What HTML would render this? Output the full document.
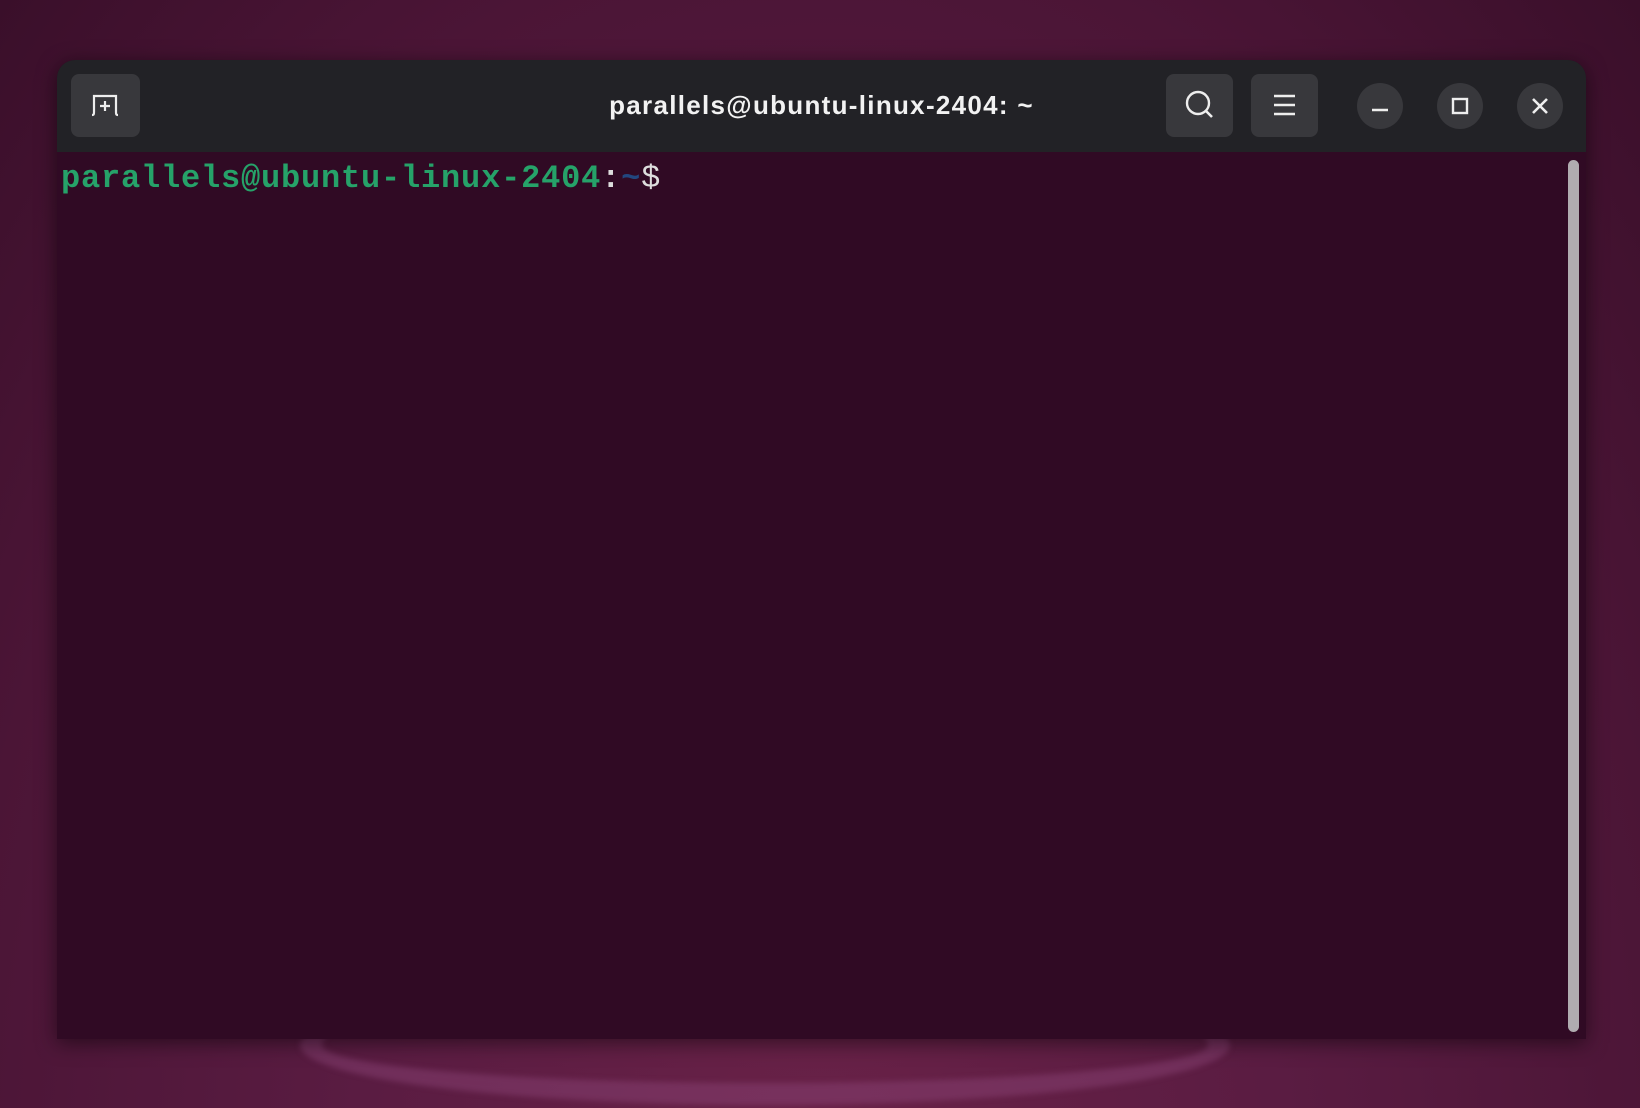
<!DOCTYPE html>
<html><head><meta charset="utf-8"><style>
html,body{margin:0;padding:0;width:1640px;height:1108px;overflow:hidden}
body{background:radial-gradient(ellipse at 50% 110%,#6a2248 0%,#5a1c42 40%,#4b1536 75%,#3a0f2a 100%);position:relative;font-family:"Liberation Sans",sans-serif}
.glow{position:absolute;left:300px;top:985px;width:930px;height:120px;border-radius:50%;border:22px solid rgba(140,70,120,.45);border-top:none;box-sizing:border-box;filter:blur(3px)}
.win{position:absolute;left:57px;top:60px;width:1529px;height:979px;border-radius:18px 18px 0 0;overflow:hidden;background:#300a24;box-shadow:0 4px 20px rgba(0,0,0,.5)}
.hdr{position:absolute;left:0;top:0;right:0;height:92px;background:#222226}
.btn{position:absolute;top:14px;height:63px;background:#38383c;border-radius:8px}
.circ{position:absolute;top:23px;width:46px;height:46px;border-radius:50%;background:#38383c}
.title{position:absolute;left:0;right:0;top:30px;text-align:center;color:#f2f2f2;font-size:26px;font-weight:bold;letter-spacing:1.3px}
.term{position:absolute;left:4px;top:100px;font-family:"Liberation Mono","DejaVu Sans Mono",monospace;font-size:32px;font-weight:bold;color:#26a269;white-space:pre;letter-spacing:0.8px}
.sb{position:absolute;left:1511px;top:100px;width:11px;height:872px;border-radius:6px;background:#b0acb0}
svg{position:absolute}
</style></head><body>
<div class="glow"></div>
<div class="win">
<div class="hdr">
 <div class="btn" style="left:14px;width:69px"><svg width="69" height="63" viewBox="0 0 69 63"><path d="M21 41c2 0 2-1 2-3V22h22v16c0 2 0 3 2 3" fill="none" stroke="#eee" stroke-width="2.2"/><path d="M34 27v10M29 32h10" stroke="#eee" stroke-width="2.2"/></svg></div>
 <div class="title">parallels@ubuntu-linux-2404: ~</div>
 <div class="btn" style="left:1109px;width:67px"><svg width="67" height="63" viewBox="0 0 67 63"><circle cx="32" cy="29" r="11" fill="none" stroke="#eee" stroke-width="2.4"/><path d="M40 37l6 6" stroke="#eee" stroke-width="2.6"/></svg></div>
 <div class="btn" style="left:1194px;width:67px"><svg width="67" height="63" viewBox="0 0 67 63"><path d="M23 22h21M23 31h21M23 40h21" stroke="#eee" stroke-width="2.4"/></svg></div>
 <div class="circ" style="left:1300px"><svg width="46" height="46"><path d="M15 27h16" stroke="#eee" stroke-width="2.6"/></svg></div>
 <div class="circ" style="left:1380px"><svg width="46" height="46"><rect x="16" y="16" width="14" height="14" fill="none" stroke="#eee" stroke-width="2.4"/></svg></div>
 <div class="circ" style="left:1460px"><svg width="46" height="46"><path d="M16 16l14 14M30 16L16 30" stroke="#eee" stroke-width="2.6"/></svg></div>
</div>
<div class="term">parallels@ubuntu-linux-2404<span style="color:#ddd">:</span><span style="color:#22477f">~</span><span style="color:#ddd;font-weight:normal">$</span></div>
<div class="sb"></div>
</div>
</body></html>
